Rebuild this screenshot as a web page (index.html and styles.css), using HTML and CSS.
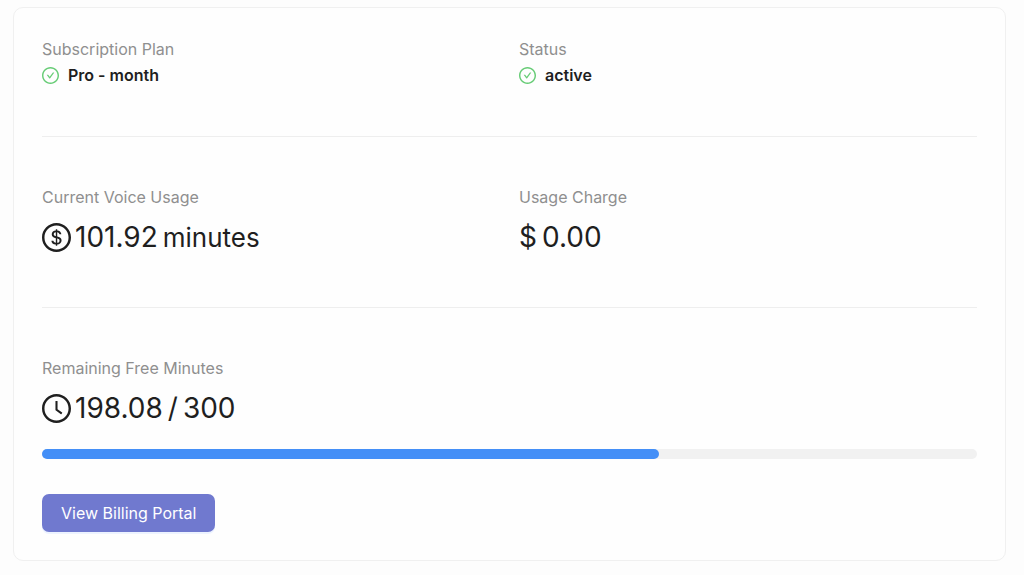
FILE: index.html
```html
<!DOCTYPE html>
<html lang="en">
<head>
<meta charset="utf-8">
<meta name="viewport" content="width=device-width, initial-scale=1">
<title>Billing</title>
<link rel="stylesheet" href="styles.css">
</head>
<body>
<svg class="sprite" aria-hidden="true">
  <symbol id="ring" viewBox="64 64 896 896"><path d="M512 64C264.600 64 64 264.600 64 512s200.600 448 448 448 448-200.600 448-448S759.400 64 512 64zm0 820c-205.400 0-372-166.600-372-372s166.600-372 372-372 372 166.600 372 372-166.600 372-372 372z"/></symbol>
  <symbol id="check" viewBox="64 64 896 896"><use href="#ring" x="64" y="64" width="896" height="896"/><path d="M699 353h-46.900c-10.200 0-19.900 4.900-25.900 13.300L469 584.300l-71.200-98.800c-6-8.300-15.600-13.300-25.900-13.300H325c-6.500 0-10.300 7.400-6.500 12.700l124.600 172.800a31.800 31.800 0 0 0 51.700 0l210.600-292c3.900-5.300.1-12.700-6.400-12.700z"/></symbol>
</svg>
<main class="card">
  <section class="row">
    <div>
      <h2 class="label">Subscription Plan</h2>
      <p class="state"><svg class="state-icon" aria-hidden="true"><use href="#check"/></svg>Pro - month</p>
    </div>
    <div>
      <h2 class="label">Status</h2>
      <p class="state"><svg class="state-icon" aria-hidden="true"><use href="#check"/></svg>active</p>
    </div>
  </section>
  <hr class="divider">
  <section class="row">
    <div>
      <h2 class="label">Current Voice Usage</h2>
      <p class="value"><svg class="value-icon" viewBox="64 64 896 896" aria-hidden="true"><use href="#ring" x="64" y="64" width="896" height="896"/><path d="M559.700 488.800l-25.400-5.900V348.600c38 5.200 61.500 29 65.500 58.200.5 4 3.900 6.900 7.900 6.900h44.900c4.700 0 8.400-4.100 8-8.800-6.100-62.300-57.400-102.300-125.900-109.200V263c0-4.400-3.600-8-8-8h-28.100c-4.400 0-8 3.600-8 8v33c-70.800 6.900-126.200 46-126.200 119 0 67.600 49.800 100.200 102.100 112.700l24.700 6.300v142.700c-44.200-5.900-69-29.500-74.100-61.300-.6-3.800-4-6.600-7.900-6.600H363c-4.700 0-8.400 4-8 8.700 4.500 55 46.200 105.600 135.200 112.100V761c0 4.400 3.600 8 8 8h28.400c4.400 0 8-3.600 8-8.100l-.2-31.700c78.300-6.900 134.300-48.800 134.300-124-.1-69.400-44.200-100.400-109-116.400zm-68.600-16.200c-5.600-1.600-10.300-3.100-15-5-33.800-12.200-49.500-31.900-49.500-57.300 0-36.300 27.500-57 64.500-61.700v124zM534.300 677V543.300c3.100.9 5.900 1.600 8.800 2.200 47.300 14.400 63.200 34.400 63.200 65.100 0 39.100-29.400 62.600-72 66.400z"/></svg><span class="amount"><span>101.92</span><span class="unit">minutes</span></span></p>
    </div>
    <div>
      <h2 class="label">Usage Charge</h2>
      <p class="value"><span class="amount"><span>$</span><span>0.00</span></span></p>
    </div>
  </section>
  <hr class="divider">
  <section>
    <h2 class="label" id="remaining">Remaining Free Minutes</h2>
    <p class="value"><svg class="value-icon" viewBox="64 64 896 896" aria-hidden="true"><use href="#ring" x="64" y="64" width="896" height="896"/><path d="M686.700 638.600L544.100 535.500V288c0-4.400-3.600-8-8-8H488c-4.400 0-8 3.600-8 8v275.400c0 2.600 1.200 5 3.300 6.500l165.400 120.600c3.600 2.600 8.600 1.800 11.200-1.700l28.600-39c2.600-3.700 1.800-8.700-1.800-11.200z"/></svg><span class="amount"><span>198.08</span><span>/</span><span>300</span></span></p>
    <div class="track" role="progressbar" aria-labelledby="remaining" aria-valuemin="0" aria-valuemax="300" aria-valuenow="198.08"><div class="fill" style="width: 66.03%"></div></div>
    <button class="portal" type="button">View Billing Portal</button>
  </section>
</main>
</body>
</html>
```
FILE: styles.css
```css
* {
  box-sizing: border-box;
}

body {
  margin: 0;
  padding: 7px 18px 14px 13px;
  background: #fdfdfd;
  color: #1f1f1f;
  font: 16px/26px Inter, "Liberation Sans", sans-serif;
}

.sprite {
  position: absolute;
  width: 0;
  height: 0;
}

.card {
  padding: 28px;
  border: 1px solid #f0f0f0;
  border-radius: 10px;
  background: #fefefe;
}

.row {
  display: grid;
  grid-template-columns: 1fr 1fr;
  column-gap: 19px;
}

.label,
.state,
.value {
  margin: 0;
}

.label {
  color: #8f8f8f;
  font-size: 16px;
  font-weight: 400;
}

.state {
  display: flex;
  align-items: center;
  gap: 9px;
  font-weight: 600;
}

.state-icon {
  width: 17px;
  height: 17px;
  fill: #67cc76;
}

.value {
  display: flex;
  align-items: center;
  gap: 4px;
  margin-top: 5px;
  font-size: 28px;
  line-height: 44px;
}

.amount {
  display: flex;
  align-items: baseline;
  gap: 5px;
}

.unit {
  font-size: 26px;
  line-height: 1;
}

.value-icon {
  width: 29px;
  height: 29px;
  fill: currentColor;
}

.divider {
  height: 1px;
  margin: 48px 0 47px;
  border: 0;
  background: #eeeeee;
}

.track {
  height: 10px;
  margin-top: 19px;
  border-radius: 5px;
  background: #f1f1f1;
}

.fill {
  height: 100%;
  border-radius: 5px;
  background: #448ff7;
}

.portal {
  height: 38px;
  margin-top: 35px;
  padding: 0 19px;
  display: block;
  border: 0;
  border-radius: 7px;
  background: #7079cf;
  box-shadow: 0 2px 0 #edf3ff;
  color: #ffffff;
  font: inherit;
  cursor: pointer;
}
```
